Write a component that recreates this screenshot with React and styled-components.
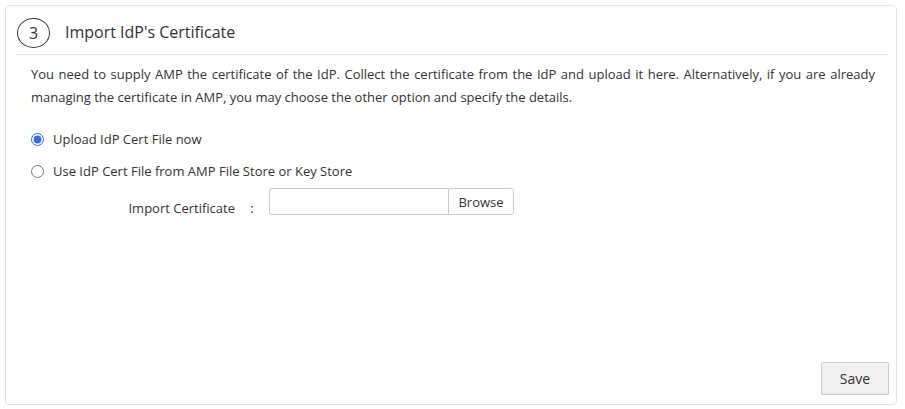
import React from 'react'
import styled, { createGlobalStyle } from 'styled-components'

const GlobalStyle = createGlobalStyle`
  html, body {
    margin: 0;
    padding: 0;
    background: #ffffff;
  }
  body {
    font-family: "Open Sans", "Liberation Sans", sans-serif;
    color: #333333;
  }
`

const Page = styled.div`
  padding: 5px 8px 4px 5px;
`

const Card = styled.section`
  height: 400px;
  box-sizing: border-box;
  border: 1px solid #e3e3e3;
  border-radius: 4px;
  display: flex;
  flex-direction: column;
  padding: 0 7px 9px 9px;
`

const Header = styled.div`
  display: flex;
  align-items: flex-start;
  height: 49px;
  box-sizing: border-box;
  padding: 12px 0 0 2px;
  border-bottom: 1px solid #e5e5e5;
`

const StepCircle = styled.div`
  width: 33px;
  height: 30px;
  box-sizing: border-box;
  border: 1px solid #333;
  border-radius: 50%;
  display: flex;
  align-items: center;
  justify-content: center;
  font-size: 16px;
  color: #333;
`

const Title = styled.h2`
  margin: 0 0 0 15px;
  font-size: 16px;
  line-height: 28px;
  font-weight: 400;
  color: #333;
`

const Body = styled.div`
  flex: 1;
  display: flex;
  flex-direction: column;
  padding: 8px 14px 0 16px;
`

const Intro = styled.p`
  margin: 0;
  font-size: 13px;
  line-height: 23px;
  text-align: justify;
  color: #333;
`

const Options = styled.div`
  margin-top: 21px;
  display: flex;
  flex-direction: column;
  gap: 13px;
`

const Option = styled.label`
  display: flex;
  align-items: center;
  font-size: 13px;
  line-height: 19px;
  color: #333;
  cursor: pointer;

  input {
    margin: 0 9px 0 0;
    width: 13px;
    height: 13px;
    accent-color: #2f6fe4;
  }
`

const FieldRow = styled.div`
  display: flex;
  align-items: center;
  margin-top: 5px;
`

const FieldLabel = styled.span`
  width: 204px;
  text-align: right;
  font-size: 13px;
  padding-top: 13px;
  color: #333;
`

const Colon = styled.span`
  width: 34px;
  text-align: center;
  font-size: 13px;
  padding-top: 13px;
`

const FileGroup = styled.div`
  display: flex;
  height: 27px;
`

const FileInput = styled.div`
  width: 179px;
  box-sizing: border-box;
  border: 1px solid #cccccc;
  border-right: none;
  border-radius: 3px 0 0 3px;
`

const BrowseButton = styled.button`
  width: 66px;
  border: 1px solid #cccccc;
  border-radius: 0 3px 3px 0;
  background: #ffffff;
  font-family: inherit;
  font-size: 13px;
  color: #333;
  padding: 0;
`

const Footer = styled.div`
  display: flex;
  justify-content: flex-end;
`

const SaveButton = styled.button`
  width: 68px;
  height: 33px;
  background: #f0f0f0;
  border: 1px solid #cccccc;
  border-radius: 2px;
  font-family: inherit;
  font-size: 14px;
  color: #333;
`

export default function App() {
  return (
    <>
      <GlobalStyle />
      <Page>
        <Card>
          <Header>
            <StepCircle>3</StepCircle>
            <Title>Import IdP's Certificate</Title>
          </Header>
          <Body>
            <Intro>
              You need to supply AMP the certificate of the IdP. Collect the certificate from the IdP and upload it here. Alternatively, if you are already managing the certificate in AMP, you may choose the other option and specify the details.
            </Intro>
            <Options>
              <Option>
                <input type="radio" name="cert" defaultChecked />
                Upload IdP Cert File now
              </Option>
              <Option>
                <input type="radio" name="cert" />
                Use IdP Cert File from AMP File Store or Key Store
              </Option>
            </Options>
            <FieldRow>
              <FieldLabel>Import Certificate</FieldLabel>
              <Colon>:</Colon>
              <FileGroup>
                <FileInput />
                <BrowseButton>Browse</BrowseButton>
              </FileGroup>
            </FieldRow>
          </Body>
          <Footer>
            <SaveButton>Save</SaveButton>
          </Footer>
        </Card>
      </Page>
    </>
  )
}
